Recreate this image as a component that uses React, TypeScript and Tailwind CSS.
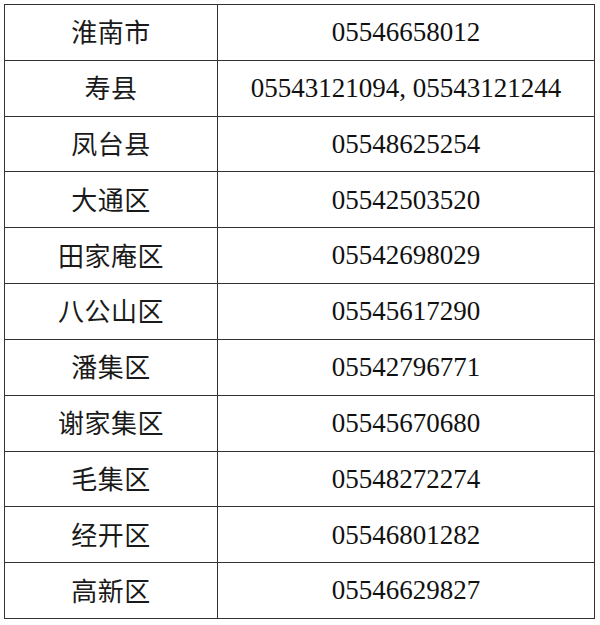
const rows: [string, string][] = [
  ['淮南市', '05546658012'],
  ['寿县', '05543121094, 05543121244'],
  ['凤台县', '05548625254'],
  ['大通区', '05542503520'],
  ['田家庵区', '05542698029'],
  ['八公山区', '05545617290'],
  ['潘集区', '05542796771'],
  ['谢家集区', '05545670680'],
  ['毛集区', '05548272274'],
  ['经开区', '05546801282'],
  ['高新区', '05546629827'],
];

export default function App() {
  return (
    <div className="w-[600px] h-[625px] bg-white pt-1 pl-1">
      <div className="grid grid-cols-[213px_377px] grid-rows-[repeat(11,1fr)] w-[591px] h-[615px] border-l border-t border-[#333]">
        {rows.map(([area, phone]) => (
          <div key={area} className="contents">
            <div className="flex items-center justify-center pb-[3px] border-r border-b border-[#333] text-[26px] tracking-[0.5px] text-[#1a1a1a] font-['Noto_Sans_CJK_SC',sans-serif]">
              {area}
            </div>
            <div className="flex items-center justify-center border-r border-b border-[#333] text-[27px] text-[#111] font-['Liberation_Serif',serif]">
              {phone}
            </div>
          </div>
        ))}
      </div>
    </div>
  );
}
